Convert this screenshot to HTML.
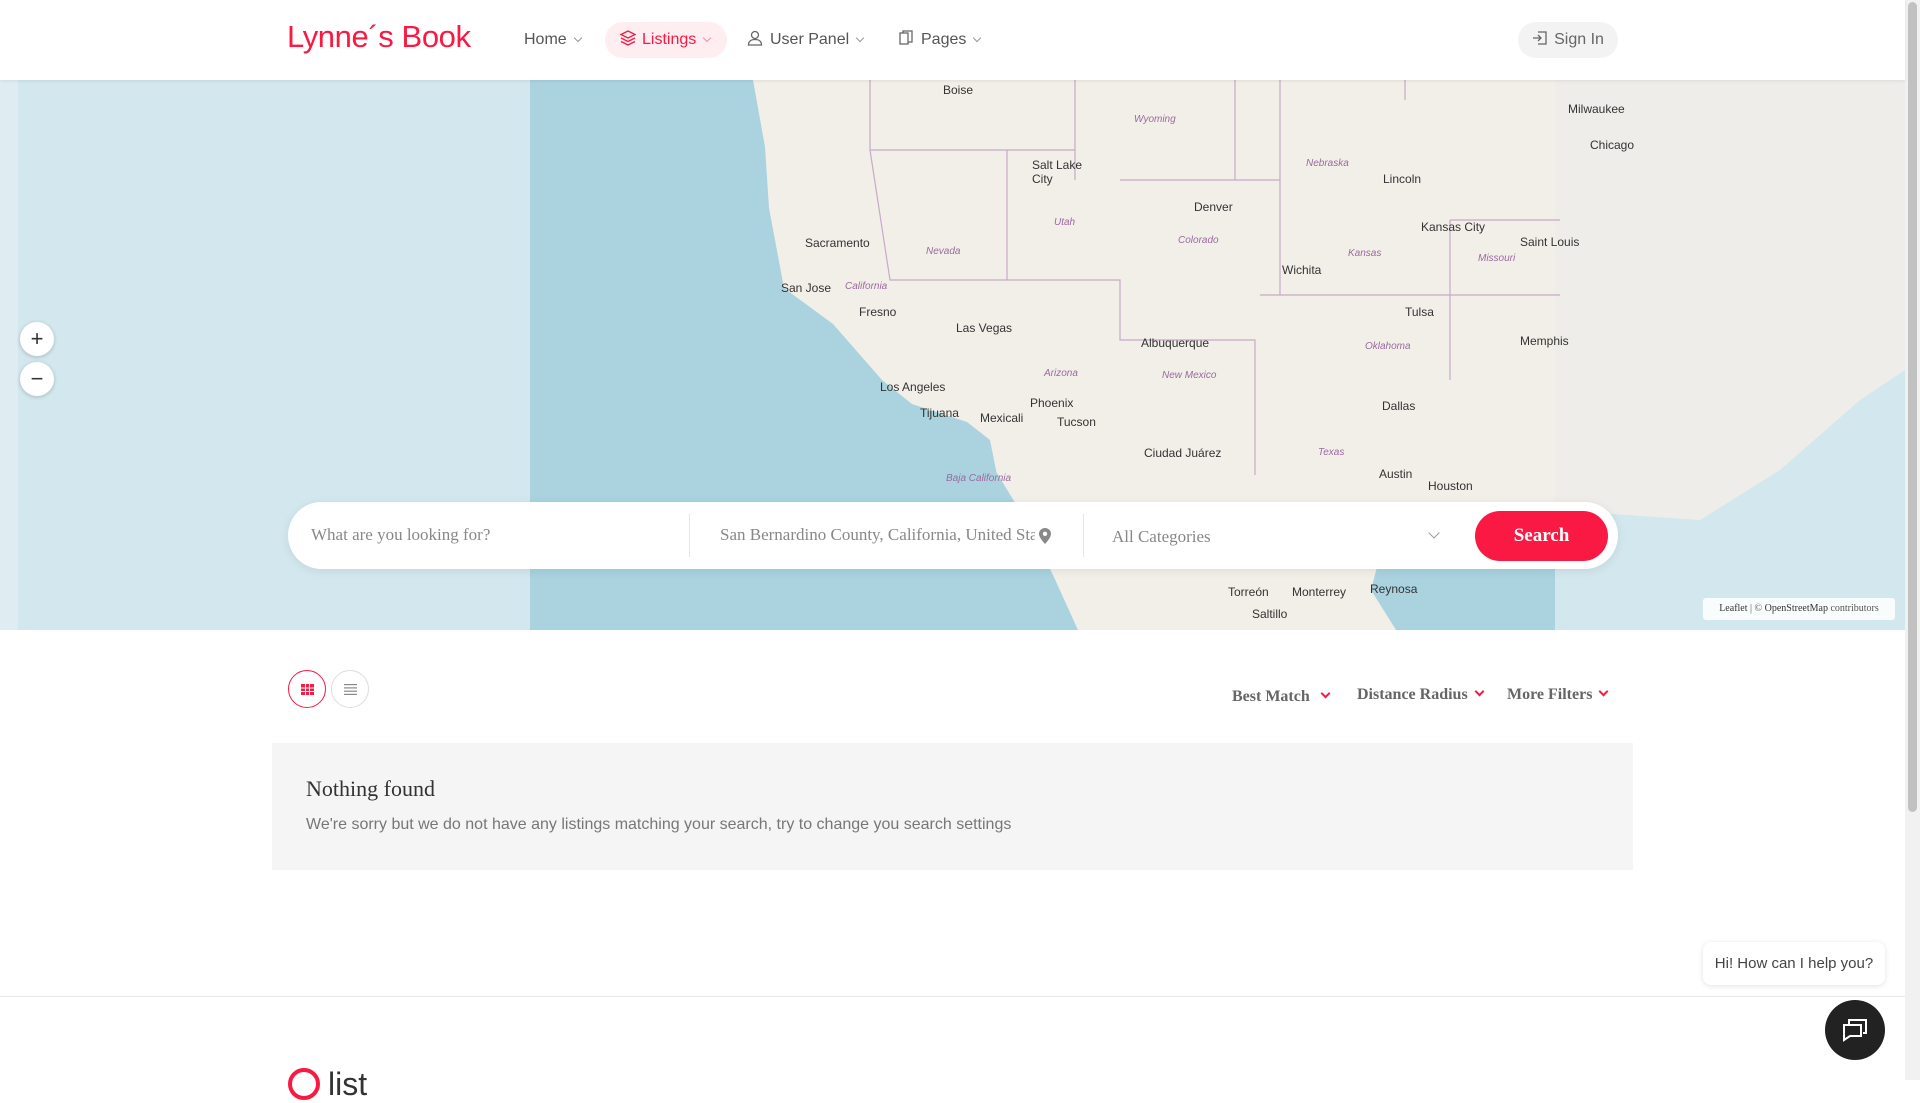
<!DOCTYPE html>
<html><head><meta charset="utf-8"><style>
*{margin:0;padding:0;box-sizing:border-box}
body{width:1920px;height:1080px;overflow:hidden;background:#fff;font-family:"Liberation Sans",sans-serif;position:relative}
.hdr{position:absolute;left:0;top:0;width:1905px;height:80px;background:#fff;z-index:5;box-shadow:0 1px 3px rgba(0,0,0,.08)}
.logo{position:absolute;left:287px;top:19px;font-size:31px;color:#f91942;font-family:"Liberation Sans",sans-serif;letter-spacing:-0.4px}
.nav{position:absolute;top:22px;height:36px;line-height:36px;font-size:16px;color:#555}
.chev{display:inline-block;width:6px;height:6px;border-right:1.3px solid #999;border-bottom:1.3px solid #999;transform:rotate(45deg);margin-left:8px;position:relative;top:-3px}
.pill{background:#feeef1;color:#f91942;border-radius:20px;padding:0 15px}
.pill .chev{border-color:#f98ea3}
.signin{position:absolute;left:1518px;top:22px;width:100px;height:36px;border-radius:18px;background:#f3f3f3;color:#666;font-size:16px;line-height:36px;text-align:center}
.map{position:absolute;left:0;top:80px;width:1905px;height:550px;overflow:hidden;background:#d3e7ee}
.lbl{position:absolute;font-size:12px;color:#333;font-family:"Liberation Sans",sans-serif}
.st{position:absolute;font-size:10px;color:#9a6aa0;font-style:italic}
.zb{position:absolute;left:20px;width:34px;height:34px;border-radius:50%;background:#fff;box-shadow:0 1px 4px rgba(0,0,0,.2);text-align:center;line-height:33px;font-size:22px;color:#333}
.search{position:absolute;left:288px;top:502px;width:1330px;height:67px;background:#fff;border-radius:34px;box-shadow:0 2px 10px rgba(0,0,0,.08);font-family:"Liberation Serif",serif;font-size:17px;color:#888}
.btn{position:absolute;left:1187px;top:9px;width:133px;height:50px;border-radius:25px;background:#f91942;color:#fff;font-weight:bold;font-size:19px;text-align:center;line-height:50px}
.circ{position:absolute;top:670px;width:38px;height:38px;border-radius:50%;border:1px solid #ddd;background:#fff}
.sort{position:absolute;top:686px;font-family:"Liberation Serif",serif;font-weight:bold;font-size:16px;color:#666}
.sort i{display:inline-block;width:7px;height:7px;border-right:2px solid #f91942;border-bottom:2px solid #f91942;transform:rotate(45deg);margin-left:12px;position:relative;top:-4px}
.box{position:absolute;left:272px;top:743px;width:1361px;height:127px;background:#f5f5f5}
</style></head><body>
<div class="hdr">
 <div class="logo">Lynne´s Book</div>
 <div class="nav" style="left:524px">Home<span class="chev"></span></div>
 <div class="nav pill" style="left:605px;width:122px"><svg width="16" height="16" viewBox="0 0 16 16" style="vertical-align:-2px;margin-right:6px" fill="none" stroke="#f91942" stroke-width="1.3"><path d="M8 1L15 4.5 8 8 1 4.5Z"/><path d="M1 8l7 3.5L15 8"/><path d="M1 11.5L8 15l7-3.5"/></svg>Listings<span class="chev"></span></div>
 <div class="nav" style="left:747px"><svg width="16" height="16" viewBox="0 0 16 16" style="vertical-align:-2px;margin-right:7px" fill="none" stroke="#666" stroke-width="1.3"><circle cx="8" cy="5" r="3.5"/><path d="M1.5 15c0-4 3-5.5 6.5-5.5s6.5 1.5 6.5 5.5z"/></svg>User Panel<span class="chev"></span></div>
 <div class="nav" style="left:898px"><svg width="16" height="16" viewBox="0 0 16 16" style="vertical-align:-2px;margin-right:7px" fill="none" stroke="#666" stroke-width="1.3"><rect x="2" y="3" width="8" height="11"/><path d="M5 3V1h9v11h-4"/></svg>Pages<span class="chev"></span></div>
 <div class="signin"><svg width="16" height="16" viewBox="0 0 16 16" style="vertical-align:-2px;margin-right:6px" fill="none" stroke="#666" stroke-width="1.3"><path d="M6 2h8v12H6"/><path d="M1 8h8M6 5l3 3-3 3"/></svg>Sign In</div>
</div>
<div class="map">
 <svg width="1905" height="550" style="position:absolute;left:0;top:0">
  <rect x="0" y="0" width="18" height="550" fill="#dfedf2"/>
  <rect x="18" y="0" width="512" height="550" fill="#d3e7ee"/>
  <rect x="530" y="0" width="1025" height="550" fill="#aad3df"/>
  <rect x="1555" y="0" width="350" height="550" fill="#efede9"/>
  <polygon points="753,0 1555,0 1555,550 1078,550 1053,495 1022,434 992,385 967,342 912,324 882,300 833,244 784,208 769,128 765,67" fill="#f2efe9"/>
  <polygon points="1384,460 1427,448 1482,436 1555,430 1555,550 1396,550 1371,510" fill="#aad3df"/>
  <polygon points="1555,430 1700,440 1780,390 1860,320 1905,290 1905,550 1555,550" fill="#d3e7ee"/>
  <polygon points="967,342 990,360 1000,410 1010,470 1000,500 985,440 975,390" fill="#aad3df"/>
  <g stroke="#c8a9c8" stroke-width="1.2" fill="none">
   <path d="M870 0V70M1075 0V100M1235 0v100M1405 0v20M870 70H1075v-30M1007 70V200H1120V260H1255V395M1120 100H1280V215H1450V140M1280 100V0M1450 140H1560M1450 215V300M1260 215H1560M1007 200H890L870 70"/>
  </g>
 </svg>
 <div class="lbl" style="left:943px;top:3px">Boise</div>
 <div class="lbl" style="left:1032px;top:78px">Salt Lake<br>City</div>
 <div class="lbl" style="left:1194px;top:120px">Denver</div>
 <div class="lbl" style="left:1383px;top:92px">Lincoln</div>
 <div class="lbl" style="left:1421px;top:140px">Kansas City</div>
 <div class="lbl" style="left:1568px;top:22px">Milwaukee</div>
 <div class="lbl" style="left:1590px;top:58px">Chicago</div>
 <div class="lbl" style="left:805px;top:156px">Sacramento</div>
 <div class="lbl" style="left:781px;top:201px">San Jose</div>
 <div class="lbl" style="left:859px;top:225px">Fresno</div>
 <div class="lbl" style="left:956px;top:241px">Las Vegas</div>
 <div class="lbl" style="left:880px;top:300px">Los Angeles</div>
 <div class="lbl" style="left:920px;top:326px">Tijuana</div>
 <div class="lbl" style="left:980px;top:331px">Mexicali</div>
 <div class="lbl" style="left:1030px;top:316px">Phoenix</div>
 <div class="lbl" style="left:1057px;top:335px">Tucson</div>
 <div class="lbl" style="left:1141px;top:256px">Albuquerque</div>
 <div class="lbl" style="left:1144px;top:366px">Ciudad Juárez</div>
 <div class="lbl" style="left:1282px;top:183px">Wichita</div>
 <div class="lbl" style="left:1405px;top:225px">Tulsa</div>
 <div class="lbl" style="left:1382px;top:319px">Dallas</div>
 <div class="lbl" style="left:1379px;top:387px">Austin</div>
 <div class="lbl" style="left:1428px;top:399px">Houston</div>
 <div class="lbl" style="left:1520px;top:254px">Memphis</div>
 <div class="lbl" style="left:1520px;top:155px">Saint Louis</div>
 <div class="lbl" style="left:1228px;top:505px">Torreón</div>
 <div class="lbl" style="left:1292px;top:505px">Monterrey</div>
 <div class="lbl" style="left:1370px;top:502px">Reynosa</div>
 <div class="lbl" style="left:1252px;top:527px">Saltillo</div>
 <div class="st" style="left:1134px;top:34px">Wyoming</div>
 <div class="st" style="left:1306px;top:78px">Nebraska</div>
 <div class="st" style="left:1054px;top:137px">Utah</div>
 <div class="st" style="left:1178px;top:155px">Colorado</div>
 <div class="st" style="left:926px;top:166px">Nevada</div>
 <div class="st" style="left:845px;top:201px">California</div>
 <div class="st" style="left:1044px;top:288px">Arizona</div>
 <div class="st" style="left:1162px;top:290px">New Mexico</div>
 <div class="st" style="left:1365px;top:261px">Oklahoma</div>
 <div class="st" style="left:1318px;top:367px">Texas</div>
 <div class="st" style="left:1348px;top:168px">Kansas</div>
 <div class="st" style="left:1478px;top:173px">Missouri</div>
 <div class="st" style="left:946px;top:393px">Baja California</div>
 <div class="zb" style="top:242px">+</div>
 <div class="zb" style="top:282px">−</div>
 <div style="position:absolute;left:1703px;top:518px;width:192px;height:22px;background:rgba(255,255,255,.85);border-radius:3px;font-family:'Liberation Serif',serif;font-size:10px;color:#555;line-height:22px;text-align:center"><b style="color:#333;font-weight:normal">Leaflet</b> | © <span style="color:#333">OpenStreetMap</span> contributors</div>
</div>
<div class="search">
 <div style="position:absolute;left:23px;top:23px">What are you looking for?</div>
 <div style="position:absolute;left:401px;top:12px;width:1px;height:43px;background:#e6e6e6"></div>
 <div style="position:absolute;left:432px;top:23px;width:315px;white-space:nowrap;overflow:hidden">San Bernardino County, California, United States</div>
 <svg style="position:absolute;left:751px;top:26px" width="12" height="16" viewBox="0 0 12 16"><path d="M6 0C2.7 0 0 2.6 0 5.8 0 10 6 16 6 16s6-6 6-10.2C12 2.6 9.3 0 6 0z" fill="#888"/><circle cx="6" cy="5.8" r="2.2" fill="#fff"/></svg>
 <div style="position:absolute;left:795px;top:12px;width:1px;height:43px;background:#e6e6e6"></div>
 <div style="position:absolute;left:824px;top:25px">All Categories</div>
 <div style="position:absolute;left:1142px;top:27px;width:8px;height:8px;border-right:1.3px solid #999;border-bottom:1.3px solid #999;transform:rotate(45deg)"></div>
 <div class="btn">Search</div>
</div>
<div class="circ" style="left:288px;border-color:#f91942"><svg style="position:absolute;left:12px;top:13px" width="13" height="11" viewBox="0 0 13 11" fill="#f91942"><rect x="0" y="0" width="13" height="11"/><g fill="#fff"><rect x="4" y="0" width="1" height="11"/><rect x="8" y="0" width="1" height="11"/><rect x="0" y="3.5" width="13" height="1"/><rect x="0" y="7" width="13" height="1"/></g></svg></div>
<div class="circ" style="left:331px"><svg style="position:absolute;left:12px;top:13px" width="13" height="11" viewBox="0 0 13 11" fill="#888"><rect y="0" width="13" height="1.2"/><rect y="3.3" width="13" height="1.2"/><rect y="6.6" width="13" height="1.2"/><rect y="9.8" width="13" height="1.2"/></svg></div>
<div class="sort" style="left:1232px;top:688px">Best Match<i></i></div>
<div class="sort" style="left:1357px">Distance Radius<i style="margin-left:8px"></i></div>
<div class="sort" style="left:1507px">More Filters<i style="margin-left:8px"></i></div>
<div class="box">
 <div style="position:absolute;left:34px;top:33px;font-family:'Liberation Serif',serif;font-size:22px;color:#333">Nothing found</div>
 <div style="position:absolute;left:34px;top:73px;font-size:16px;color:#777">We're sorry but we do not have any listings matching your search, try to change you search settings</div>
</div>
<div style="position:absolute;left:0;top:996px;width:1905px;height:1px;background:#e8e8e8"></div>
<div style="position:absolute;left:288px;top:1068px;width:32px;height:32px;border:4px solid #f91942;border-radius:50%"></div>
<div style="position:absolute;left:328px;top:1066px;font-size:32px;color:#333">list</div>
<div style="position:absolute;left:1703px;top:942px;width:182px;height:43px;background:#fff;border-radius:8px;box-shadow:0 1px 6px rgba(0,0,0,.12);font-size:15px;color:#444;line-height:43px;text-align:center">Hi! How can I help you?</div>
<div style="position:absolute;left:1825px;top:1000px;width:60px;height:60px;border-radius:50%;background:#222"><svg style="position:absolute;left:17px;top:18px" width="26" height="24" viewBox="0 0 26 24" fill="none" stroke="#fff" stroke-width="2"><path d="M7 7V2h17v13h-3"/><path d="M2 7h17v11H8l-6 4z"/></svg></div>
<div style="position:absolute;left:1905px;top:0;width:15px;height:1080px;background:#f1f1f1"><div style="position:absolute;left:3px;top:2px;width:9px;height:810px;background:#c1c1c1;border-radius:5px"></div></div>
</body></html>
